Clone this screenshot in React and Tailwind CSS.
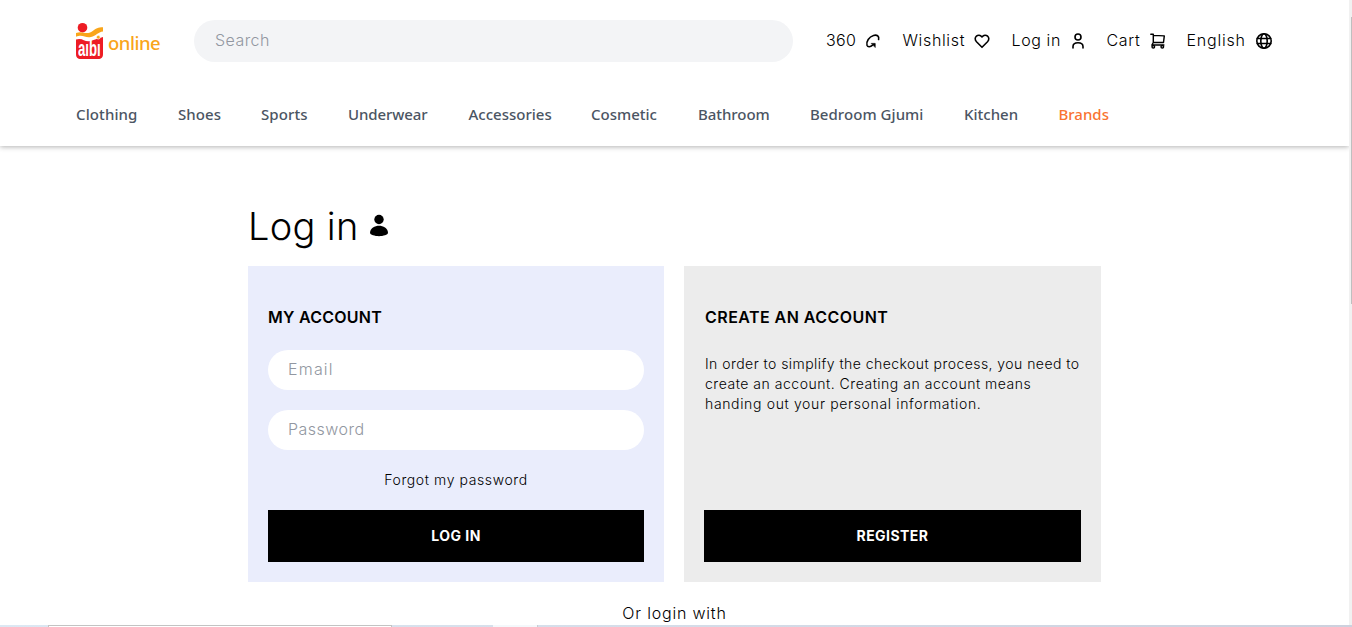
const categories = [
  { name: 'Clothing', style: 'w-[102px] tracking-[0.1px]' },
  { name: 'Shoes', style: 'w-[83px] tracking-[0.05px]' },
  { name: 'Sports', style: 'w-[87px] tracking-[0.1px]' },
  { name: 'Underwear', style: 'w-[120.5px] tracking-[-0.1px]' },
  { name: 'Accessories', style: 'w-[122.5px]' },
  { name: 'Cosmetic', style: 'w-[107px]' },
  { name: 'Bathroom', style: 'w-[112px] tracking-[-0.05px]' },
  { name: 'Bedroom Gjumi', style: 'w-[154px] tracking-[0.05px]' },
  { name: 'Kitchen', style: 'w-[94.5px]' },
  { name: 'Brands', style: 'text-[#f97331]' },
];

function Logo() {
  return (
    <a className="flex h-10 w-[118px] shrink-0 items-start">
      <span className="relative -mt-px block h-10 w-7 shrink-0">
        <svg className="block h-10 w-7" viewBox="0 0 28 40">
          <circle cx="6.5" cy="7.7" r="4.8" fill="#ed1c24" />
          <path d="M0 19.5C7 17 9 23.500 16 20.500L27 17V34c0 3.500-1.500 5-5 5H5c-3.500 0-5-1.500-5-5Z" fill="#ed1c24" />
          <path d="M0 13C7 10.500 10 15.500 16 11.500C20 8.500 22 7.300 27 7.300V11.500C22 12 20 16 15 17C9 18.300 7 14 0 16.800Z" fill="#f9a51a" />
          <circle cx="22.300" cy="17.200" r="1.900" fill="#f9a51a" stroke="#fff" strokeWidth=".7" />
        </svg>
        <span className="absolute top-[18px] left-[2px] origin-left scale-x-[.66] scale-y-110 font-['Liberation_Sans'] text-[20px] leading-5 font-bold text-white">aıbı</span>
      </span>
      <span className="mt-[10px] ml-1 font-['Noto_Sans',sans-serif] text-[18.5px] leading-6 font-medium tracking-[-0.5px] text-[#f9a51a]">online</span>
    </a>
  );
}

function Icon({ children }) {
  return (
    <svg className="h-5 w-5 shrink-0" viewBox="0 0 20 20" fill="none" stroke="#000" strokeWidth="1.6" strokeLinecap="round" strokeLinejoin="round">
      {children}
    </svg>
  );
}

function Header() {
  return (
    <header className="h-[146px] bg-white shadow-[0_1px_5px_rgba(0,0,0,0.3)]">
      <div className="flex h-[82px] items-center pl-[76px]">
        <Logo />
        <input aria-label="Search" placeholder="Search" className="h-[42px] w-[599px] shrink-0 rounded-full bg-[#f3f4f6] px-[21px] pb-[2px] text-base font-light tracking-[0.45px] outline-none placeholder:text-[#9297a1]" />
        <nav className="ml-[34px] flex items-center text-base font-light tracking-[0.65px] whitespace-nowrap text-black">
          <a className="flex w-[75.500px] items-center">
            <span className="mb-0.5 -ml-px w-[37px] tracking-[0.3px]">360</span>
            <Icon><path d="M15.600 8.500C16.500 4.900 13.800 3.500 10.500 4.400C6 5.700 3 10.700 4 14.200C4.800 16.600 7.500 16 9.600 14.200" /><path d="M8.600 12.400h3.600v3.700Z" fill="#000" strokeWidth=".7" /></Icon>
          </a>
          <a className="flex w-[109px] items-center">
            <span className="mb-0.5 w-[69px]">Wishlist</span>
            <Icon><path d="M10 16.300L4.500 10.800C.600 6.500 6.400 1.600 10 5.900C13.600 1.600 19.400 6.500 15.500 10.800Z" /></Icon>
          </a>
          <a className="flex w-[95px] items-center tracking-[0.6px]">
            <span className="mb-0.5 w-[56px]">Log in</span>
            <Icon><circle cx="10" cy="6" r="3" /><path d="M5 17v-1.500C5 12.500 7 11.700 10 11.700s5 .800 5 3.800V17" /></Icon>
          </a>
          <a className="flex w-[80px] items-center">
            <span className="mb-0.5 w-[41px]">Cart</span>
            <Icon><g strokeWidth="1.45"><path d="M2.800 3.200h2.500v8.300M5.300 4.400l11 .500-.800 6.600H5.300L3.900 14h12" /><circle cx="5.300" cy="15.700" r="1.300" /><circle cx="14.300" cy="15.700" r="1.300" /></g></Icon>
          </a>
          <a className="flex items-center">
            <span className="mb-0.5 w-[67px] tracking-[0.8px]">English</span>
            <Icon><circle cx="10" cy="10" r="7.200" /><ellipse cx="10" cy="10" rx="3.200" ry="7.200" /><path d="M3.300 7.500h13.400M3.300 12.500h13.400" /></Icon>
          </a>
        </nav>
      </div>
      <nav className="flex h-16 items-center pt-px pl-[76px] font-['Noto_Sans',sans-serif] text-[15px] font-medium whitespace-nowrap text-[#4b5563]">
        {categories.map((c) => <a key={c.name} className={c.style}>{c.name}</a>)}
      </nav>
    </header>
  );
}

const field = 'mb-5 h-10 rounded-full bg-white px-5 pb-[2px] text-base font-light outline-none placeholder:text-[#9297a1]';
const button = 'h-[52px] w-full bg-black text-sm font-bold text-white';

export default function App() {
  return (
    <div className="flex h-[627px] flex-col overflow-hidden bg-white font-['Inter',sans-serif] text-black">
      <div className="flex min-h-0 flex-1">
        <div className="min-w-0 flex-1">
          <Header />
          <main className="ml-[248px] w-[853px]">
            <h1 className="flex h-[120px] items-end pb-[17px] text-[38px] leading-[46px] font-light tracking-[0.3px]">
              <span className="w-[121px]">Log in</span>
              <svg className="mb-[11px] h-6 w-5" viewBox="0 0 20 24"><circle cx="10" cy="5.500" r="4.700" /><path d="M1 19C1 14 6 11.800 10 11.800S19 14 19 19C19 20.500 14 22.200 10 22.200S1 20.500 1 19Z" /></svg>
            </h1>
            <div className="flex h-[316px] gap-5">
              <section className="flex w-[416px] flex-col bg-[#eaedfc] p-5">
                <h2 className="mt-[19px] mb-[21px] h-6 text-base font-semibold tracking-[0.25px]">MY ACCOUNT</h2>
                <input aria-label="Email" placeholder="Email" className={`${field} tracking-[1.2px]`} />
                <input aria-label="Password" type="password" placeholder="Password" className={`${field} tracking-[0.5px]`} />
                <a className="mb-5 text-center text-sm leading-5 font-light tracking-[0.6px]">Forgot my password</a>
                <button className={`${button} tracking-[0.5px]`}>LOG IN</button>
              </section>
              <section className="flex w-[417px] flex-col bg-[#ececec] p-5">
                <h2 className="mt-[19px] mb-[25px] h-6 pl-px text-base font-semibold tracking-[0.45px]">CREATE AN ACCOUNT</h2>
                <p className="pl-px text-sm leading-5 font-light whitespace-nowrap">
                  <span className="block tracking-[0.45px]">In order to simplify the checkout process, you need to</span>
                  <span className="block tracking-[0.52px]">create an account. Creating an account means</span>
                  <span className="block tracking-[0.65px]">handing out your personal information.</span>
                </p>
                <button className={`${button} mt-auto tracking-[0.45px]`}>REGISTER</button>
              </section>
            </div>
            <p className="mt-[19px] text-center text-base leading-6 font-light tracking-[0.8px]">Or login with</p>
          </main>
        </div>
        <div className="flex w-[3px] justify-end bg-[#f1f1f1] pt-[17px]">
          <div className="h-[287px] w-px bg-[#bfbfbf]" />
        </div>
      </div>
      <div className="flex h-0.5 shrink-0 bg-gradient-to-r from-[#dce8f3] to-[#cdd1de]">
        <div className="w-12" />
        <div className="w-[344px] border-x border-t border-[#c3c3c3] bg-white" />
        <div className="w-[101px]" />
        <div className="w-[45px] border-r border-[#c8cdd2] bg-[#f4f8fb]" />
      </div>
    </div>
  );
}
